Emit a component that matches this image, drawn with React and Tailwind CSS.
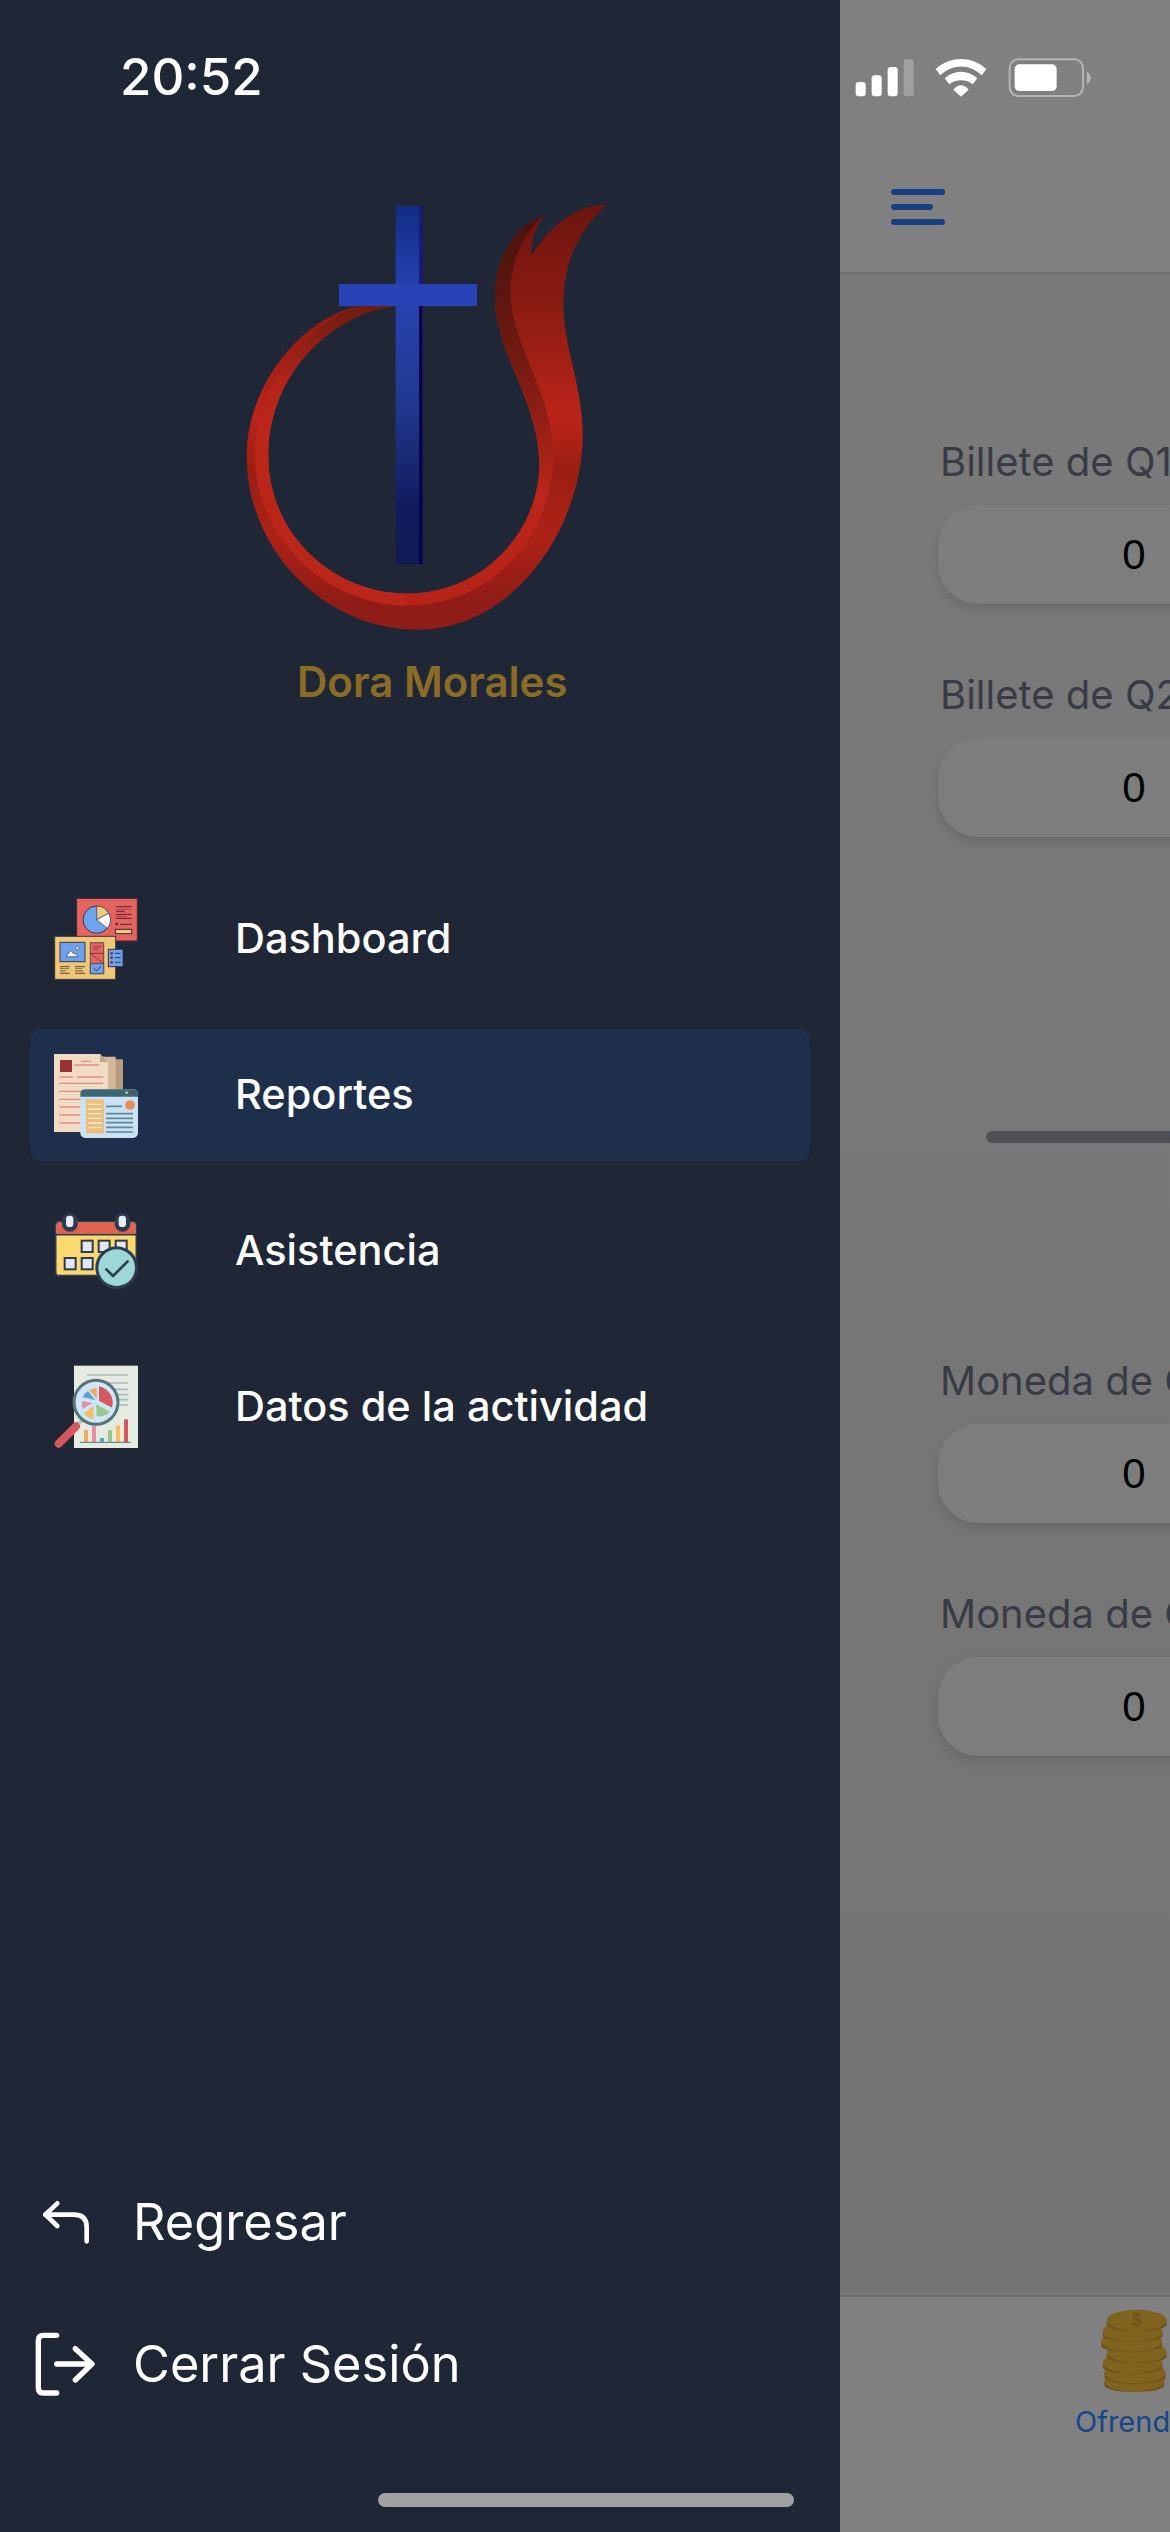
import React from 'react';

const Logo = () => (
    <svg width="460" height="460" viewBox="0 0 1380 1335" preserveAspectRatio="none" className="block">
        <defs>
            <linearGradient id="outerRed" x1="0" y1="72" x2="0" y2="1305" gradientUnits="userSpaceOnUse">
                <stop offset="0" stopColor="#6b150f" />
                <stop offset="0.25" stopColor="#8d1c12" />
                <stop offset="0.5" stopColor="#bb2419" />
                <stop offset="0.62" stopColor="#9b1e13" />
                <stop offset="0.78" stopColor="#ad2216" />
                <stop offset="0.93" stopColor="#8f1c16" />
            </linearGradient>
            <linearGradient id="innerRed" x1="0" y1="100" x2="0" y2="1240" gradientUnits="userSpaceOnUse">
                <stop offset="0" stopColor="#47120c" />
                <stop offset="0.35" stopColor="#6f1a10" />
                <stop offset="0.5" stopColor="#8e1e14" />
                <stop offset="0.72" stopColor="#bd261a" />
                <stop offset="1" stopColor="#b52317" />
            </linearGradient>
            <linearGradient id="leftRed" x1="0" y1="365" x2="0" y2="700" gradientUnits="userSpaceOnUse">
                <stop offset="0" stopColor="#6f1a10" />
                <stop offset="0.7" stopColor="#b4241a" />
                <stop offset="1" stopColor="#bb261a" />
            </linearGradient>
            <linearGradient id="crossBlue" x1="0" y1="75" x2="0" y2="1115" gradientUnits="userSpaceOnUse">
                <stop offset="0" stopColor="#122c85" />
                <stop offset="0.25" stopColor="#2843b2" />
                <stop offset="0.55" stopColor="#22388f" />
                <stop offset="0.85" stopColor="#101b5c" />
                <stop offset="1" stopColor="#0f1a55" />
            </linearGradient>
        </defs>
        <path
            fill="url(#outerRed)"
            d="M590 365 C400 385 205 560 205 800 C205 1030 400 1200 620 1200 C850 1200 1020 1020 1018 820 C1015 640 885 500 885 340 C885 220 950 130 1032 103 C1005 140 990 180 995 218 C1050 130 1130 72 1220 72 C1130 150 1088 250 1090 370 C1095 500 1148 600 1148 740 C1148 1000 950 1305 650 1305 C380 1305 140 1080 140 800 C140 600 300 400 480 365 Z"
        />
        <path
            fill="url(#innerRed)"
            d="M1032 103 C950 130 885 220 885 340 C885 500 1015 640 1018 820 C1020 1020 850 1200 620 1200 L620 1235 C880 1235 1062 1030 1060 790 C1058 620 935 480 932 330 C930 230 975 150 1032 103 Z"
        />
        <path
            fill="url(#leftRed)"
            d="M590 365 C400 385 205 560 205 800 C205 1030 400 1200 620 1200 L620 1235 C370 1235 165 1030 165 800 C165 610 310 420 480 365 Z"
        />
        <rect x="587" y="75" width="81" height="1040" fill="url(#crossBlue)" />
        <rect x="657" y="75" width="11" height="1040" fill="#05054f" />
        <rect x="657" y="75" width="11" height="227" fill="#1b1a78" />
        <rect x="417" y="302" width="414" height="64" fill="#2743b5" />
    </svg>
);

const DashboardIcon = () => (
    <svg width="88" height="88" viewBox="96 72 264 264">
        <rect x="170" y="82" width="182" height="128" fill="#e5645f" stroke="#3b2b3b" strokeWidth="3" />
        <circle cx="230" cy="146" r="41" fill="#6fa2ef" stroke="#33384f" strokeWidth="3" />
        <path d="M230 146 L230 105 A41 41 0 0 1 266 127 Z" fill="#f0c980" stroke="#33384f" strokeWidth="2" />
        <path d="M230 146 L266 127 A41 41 0 0 1 262 172 Z" fill="#ffffff" stroke="#33384f" strokeWidth="2" />
        <path d="M288 107 H335 M288 121 H314 M288 130 H335 M288 142 H335 M300 160 H335" stroke="#5a2430" strokeWidth="3" />
        <path d="M286 115 H332 M288 136 H320" stroke="#8a3a40" strokeWidth="2" />
        <circle cx="290" cy="159" r="4" fill="#5a2430" />
        <rect x="286" y="175" width="49" height="13" fill="#efc77e" stroke="#3b2b3b" strokeWidth="3" />
        <rect x="104" y="196" width="183" height="129" fill="#efc67a" stroke="#3b3a3a" strokeWidth="3" />
        <rect x="120" y="214" width="75" height="58" fill="#6ea1ee" stroke="#33384f" strokeWidth="3" />
        <path d="M138 257 L152 238 L162 250 L167 246 L174 257 Z" fill="#ffffff" stroke="#33384f" strokeWidth="2" />
        <circle cx="172" cy="231" r="5" fill="#ffffff" stroke="#33384f" strokeWidth="2" />
        <path d="M120 287 H149 M120 307 H149 M165 287 H195 M165 307 H195" stroke="#5c4a2c" strokeWidth="3" />
        <path d="M120 293 H147 M120 300 H137 M165 293 H187 M165 300 H190" stroke="#9a8250" strokeWidth="4" />
        <rect x="211" y="215" width="40" height="93" fill="#e5645f" stroke="#55505a" strokeWidth="3" />
        <rect x="211" y="278" width="40" height="30" fill="#6ea1ee" stroke="#55505a" strokeWidth="3" />
        <path d="M211 247 H251 M211 247 L251 278 M220 227 H243 M220 234 H235" stroke="#5a2430" strokeWidth="2" />
        <path d="M221 291 L230 299 L243 286" fill="none" stroke="#33384f" strokeWidth="3" />
        <rect x="265" y="235" width="44" height="52" fill="#6ea1ee" stroke="#2d3348" strokeWidth="3" />
        <circle cx="275" cy="247" r="4" fill="#8e2a2a" />
        <circle cx="275" cy="260" r="4" fill="#8e2a2a" />
        <circle cx="275" cy="274" r="4" fill="#8e2a2a" />
        <path d="M285 247 H302 M285 260 H302 M285 274 H302" stroke="#33384f" strokeWidth="3" />
    </svg>
);

const ReportesIcon = () => (
    <svg width="88" height="88" viewBox="96 540 264 264">
        <path d="M270 565 H309 V760 H270 Z" fill="#b89a7e" />
        <path d="M245 557 H287 V770 H245 Z" fill="#d4b89c" />
        <path d="M102 549 H240 L264 573 V783 H102 Z" fill="#f0dcc4" />
        <path d="M240 549 L264 573 H240 Z" fill="#c2a689" />
        <rect x="120" y="567" width="36" height="36" fill="#9c2f36" />
        <path d="M183 571 H213 M162 582 H237 M118 618 H159 M171 618 H250 M118 637 H250 M118 661 H250 M118 685 H250 M118 708 H250 M118 732 H250 M118 756 H250" stroke="#e88a8a" strokeWidth="4" />
        <rect x="181" y="655" width="173" height="146" rx="15" fill="#c9e3f5" />
        <path d="M181 677 V670 Q181 655 196 655 H339 Q354 655 354 670 V677 Z" fill="#3b6673" />
        <circle cx="320" cy="665" r="4" fill="#a9d79c" />
        <circle cx="336" cy="665" r="4" fill="#9a3038" />
        <rect x="198" y="685" width="54" height="102" fill="#f0bd78" />
        <path d="M204 700 H246 M204 714 H246 M204 728 H246 M204 742 H246 M204 756 H246 M204 770 H246" stroke="#fbeedd" strokeWidth="4" />
        <circle cx="330" cy="702" r="14.5" fill="#e98e5a" />
        <path d="M258 706 H306 M258 728 H339 M258 742 H339 M258 755 H339 M258 769 H339 M258 783 H339" stroke="#5f8797" strokeWidth="5" />
    </svg>
);

const AsistenciaIcon = () => (
    <svg width="88" height="88" viewBox="96 50 264 264">
        <rect x="107" y="94" width="242" height="162" rx="9" fill="#fcd970" stroke="#2f3a50" strokeWidth="5" />
        <path d="M110 130 V103 Q110 97 116 97 H340 Q346 97 346 103 V130 Z" fill="#e2624f" />
        <path d="M108 133 H348" stroke="#2f3a50" strokeWidth="5" />
        <rect x="126" y="68" width="47" height="56" rx="23" fill="#2f3a50" />
        <rect x="284" y="68" width="47" height="56" rx="23" fill="#2f3a50" />
        <rect x="138" y="76" width="22" height="34" rx="10" fill="#e5eef7" />
        <rect x="296" y="76" width="22" height="34" rx="10" fill="#e5eef7" />
        {[[185, 151], [236, 151], [287, 151], [134, 203], [185, 203]].map(([x, y]) => (
            <rect key={`${x}-${y}`} x={x} y={y} width="33" height="34" fill="#dfe8f3" stroke="#2f3a50" strokeWidth="6" />
        ))}
        <circle cx="290" cy="232" r="64" fill="#2f3a50" />
        <circle cx="290" cy="232" r="55" fill="#9cd8d8" />
        <path d="M259 237 L279 257 L323 213" fill="none" stroke="#2f3a50" strokeWidth="8" strokeLinecap="round" strokeLinejoin="round" />
    </svg>
);

const DatosIcon = () => (
    <svg width="88" height="88" viewBox="96 522 264 264">
        <rect x="162" y="530" width="192" height="247" fill="#e5ebe0" />
        <path d="M201 558 H325 M260 582 H325 M260 601 H325 M260 617 H325 M260 632 H325 M260 648 H325" stroke="#a5bcbc" strokeWidth="5" />
        <rect x="192" y="723" width="12" height="38" fill="#f0a860" />
        <rect x="216" y="710" width="12" height="51" fill="#e88fa0" />
        <rect x="240" y="747" width="12" height="14" fill="#5b9fd8" />
        <rect x="264" y="723" width="12" height="38" fill="#98c98a" />
        <rect x="288" y="709" width="12" height="52" fill="#f6bd60" />
        <rect x="312" y="691" width="12" height="70" fill="#d6585f" />
        <path d="M180 760 H332" stroke="#6b8a8f" strokeWidth="4" />
        <path d="M190 690 L172 708" stroke="#b7c8c8" strokeWidth="10" />
        <path d="M168 712 L116 764" stroke="#d6585f" strokeWidth="24" strokeLinecap="round" />
        <circle cx="228" cy="640" r="66" fill="#cfe6f8" stroke="#57737a" strokeWidth="9" />
        <path d="M237 592 A50 50 0 0 1 276 656 L237 635 Z" fill="#d6585f" />
        <path d="M228 646 L270 668 A50 50 0 0 1 230 682 Z" fill="#98c98a" />
        <path d="M220 650 V690 A46 46 0 0 1 192 674 Z" fill="#f6bd60" />
        <path d="M218 642 L188 660 A46 46 0 0 1 186 636 Z" fill="#e88fa0" />
        <path d="M226 634 L188 624 A46 46 0 0 1 204 606 Z" fill="#5b9fd8" />
        <path d="M230 630 L208 603 A46 46 0 0 1 230 598 Z" fill="#f0a860" />
    </svg>
);

const StatusIcons = () => (
    <svg width="240" height="42" viewBox="100 80 720 126" className="block">
        <rect x="108" y="155" width="30" height="43" rx="9" fill="#ffffff" />
        <rect x="156" y="135" width="30" height="63" rx="9" fill="#ffffff" />
        <rect x="204" y="110" width="30" height="88" rx="9" fill="#ffffff" />
        <rect x="252" y="87" width="30" height="111" rx="9" fill="#a0a0a0" />
        <path d="M348 116 C392 76 456 76 500 116 L486 135 C450 100 398 100 362 135 Z" fill="#ffffff" />
        <path d="M375 144 C402 118 446 118 473 144 L459 162 C440 146 408 146 389 162 Z" fill="#ffffff" />
        <path d="M401 178 C414 160 434 160 447 178 L424 199 Z" fill="#ffffff" />
        <rect x="570" y="87" width="220" height="110" rx="26" fill="none" stroke="#b5b5b5" strokeWidth="6" />
        <rect x="585" y="102" width="126" height="80" rx="14" fill="#ffffff" />
        <path d="M801 124 Q813 130 813 143 Q813 155 801 161 Z" fill="#b5b5b5" />
    </svg>
);

const Coins = () => (
    <svg width="66" height="83" viewBox="843 178 198 250" className="block">
        {[
            [943, 395, 90],
            [945, 370, 92],
            [938, 340, 90],
            [950, 308, 90],
            [935, 275, 92],
            [938, 245, 90],
            [950, 212, 90],
        ].map(([cx, cy, rx]) => (
            <g key={cy}>
                <path d={`M${cx - rx} ${cy} V${cy + 14} A${rx} 19 0 0 0 ${cx + rx} ${cy + 14} V${cy} Z`} fill="#74501a" />
                <ellipse cx={cx} cy={cy} rx={rx} ry="32" fill="#7f641f" />
            </g>
        ))}
        <text x="950" y="228" textAnchor="middle" fontFamily="Liberation Sans, sans-serif" fontWeight="700" fontSize="54" fill="#74501a">$</text>
    </svg>
);

const menu = [
    { label: 'Dashboard', Icon: DashboardIcon },
    { label: 'Reportes', Icon: ReportesIcon, active: true },
    { label: 'Asistencia', Icon: AsistenciaIcon },
    { label: 'Datos de la actividad', Icon: DatosIcon },
];

const Field = ({ label }) => (
    <div className="whitespace-nowrap">
        <div className="h-[48px] mb-[19px] pl-[2px] text-[40px] leading-[48px] text-[#383b44]">{label}</div>
        <div className="w-[392px] h-[99px] rounded-[40px] bg-[#7d7d7d] shadow-[0_5px_12px_rgba(0,0,0,0.12)] flex items-center justify-center text-[42px] text-black font-['Liberation_Sans',sans-serif]">0</div>
    </div>
);

export default function App() {
    return (
        <div className="relative w-[1170px] h-[2532px] flex overflow-hidden font-['Inter',sans-serif]">
            {/* drawer */}
            <aside className="w-[840px] flex-shrink-0 flex flex-col bg-[#1f2737] text-white">
                <div className="h-[154px] flex items-center pl-[120px] text-[51px] font-medium">20:52</div>
                <div className="mt-[26px] ml-[200px]">
                    <Logo />
                </div>
                <div className="mt-[18px] ml-[297px] text-[42px] leading-[48px] font-semibold text-[#8b6c25]">Dora Morales</div>

                <nav className="mt-[167px] ml-[30px] w-[780px] flex flex-col gap-[24px]">
                    {menu.map(({ label, Icon, active }) => (
                        <div key={label} className={`h-[132px] flex items-center pl-[22px] rounded-[12px] ${active ? 'bg-[#1e2f4c]' : ''}`}>
                            <div className="w-[183px] flex-shrink-0">
                                <Icon />
                            </div>
                            <span className="pb-[1px] text-[41.5px] font-[450]">{label}</span>
                        </div>
                    ))}
                </nav>

                <div className="mt-auto pb-[128px] flex flex-col gap-[62px] text-[50.5px]">
                    <div className="h-[80px] flex items-center pl-[33px]">
                        <svg width="64" height="60" viewBox="99 90 192 180" className="flex-shrink-0 mr-[36px]" fill="none" stroke="#ffffff" strokeWidth="14" strokeLinecap="round" strokeLinejoin="round">
                            <path d="M172 124 L136 158 L172 192" />
                            <path d="M136 158 H222 Q260 158 260 196 V238" />
                        </svg>
                        <span>Regresar</span>
                    </div>
                    <div className="h-[80px] flex items-center pl-[33px]">
                        <svg width="64" height="64" viewBox="99 512 192 192" className="flex-shrink-0 mr-[36px]" fill="none" stroke="#ffffff" strokeWidth="16" strokeLinecap="round" strokeLinejoin="round">
                            <path d="M170 522 H130 Q115 522 115 537 V680 Q115 695 130 695 H170" />
                            <path d="M170 608 H274" />
                            <path d="M226 562 L276 608 L226 656" />
                        </svg>
                        <span>Cerrar Sesión</span>
                    </div>
                </div>
            </aside>

            {/* dimmed page behind the drawer */}
            <main className="flex-1 min-w-0 flex flex-col bg-[#777777]">
                <header className="h-[274px] flex-shrink-0 bg-[#808080] border-b-2 border-[#6e6e6e] pt-[57px] pl-[13px]">
                    <StatusIcons />
                    <div className="mt-[90px] ml-[38px] flex flex-col gap-[9px]">
                        <div className="w-[54px] h-[6px] rounded-full bg-[#173f82]" />
                        <div className="w-[42px] h-[6px] rounded-full bg-[#173f82]" />
                        <div className="w-[54px] h-[6px] rounded-full bg-[#173f82]" />
                    </div>
                </header>

                <div className="flex-1 min-h-0 overflow-hidden pt-[164px] pl-[98px] bg-gradient-to-b from-[#7a7a7a] to-[#747474]">
                    <div className="flex flex-col gap-[67px]">
                        <Field label="Billete de Q100" />
                        <Field label="Billete de Q200" />
                    </div>
                    <div className="mt-[294px] ml-[48px] w-[400px] h-[12px] rounded-full bg-[#4e5056]" />
                    <div className="mt-[214px] flex flex-col gap-[67px]">
                        <Field label="Moneda de Q1" />
                        <Field label="Moneda de Q0.50" />
                    </div>
                </div>

                <footer className="h-[237px] flex-shrink-0 bg-[#808080] border-t-2 border-[#6e6e6e] pt-[12px] pl-[235px] whitespace-nowrap">
                    <div className="ml-[26px]">
                        <Coins />
                    </div>
                    <div className="mt-[12px] text-[29px] leading-[36px] text-[#17458c]">Ofrendas</div>
                </footer>
            </main>

            {/* iOS home indicator */}
            <div className="absolute left-[378px] top-[2493px] w-[416px] h-[14px] rounded-full bg-[#a1a1a1]" />
        </div>
    );
}
